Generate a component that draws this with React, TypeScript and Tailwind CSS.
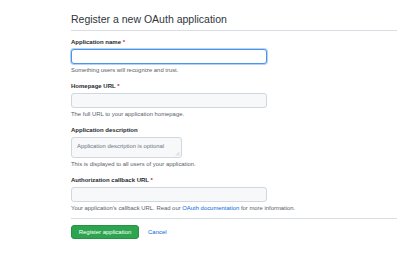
import React from "react";

const label = "block text-[6px] leading-[8px] font-bold text-[#24292f]";
const note = "mt-[2px] text-[5.9px] leading-[8px] text-[#57606a]";
const input =
  "block w-[196px] h-[15px] rounded-[3px] border border-[#d0d7de] bg-[#f6f8fa] px-[4px] text-[6px] outline-none";

export default function App() {
  return (
    <div
      className="min-h-screen bg-white pl-[71px] pr-[3px] pt-[12px] text-[#24292f]"
      style={{ fontFamily: '"Liberation Sans", Arial, sans-serif' }}
    >
      <div className="border-b border-[#d8dee4] pb-[4px]">
        <h2 className="text-[10.5px] leading-[14px] font-normal text-[#2f353b]">
          Register a new OAuth application
        </h2>
      </div>

      <form className="mt-[7px] flex flex-col gap-[8px]">
        <div>
          <label className={label}>
            Application name <span className="text-[#cf222e]">*</span>
          </label>
          <input
            type="text"
            className="mt-[3px] block w-[196px] h-[15px] rounded-[3px] border border-[#4a94ec] bg-white px-[4px] text-[6px] outline-none shadow-[0_0_0_1px_#b6d3f5]"
          />
          <p className={note}>Something users will recognize and trust.</p>
        </div>

        <div>
          <label className={label}>
            Homepage URL <span className="text-[#cf222e]">*</span>
          </label>
          <input type="text" className={"mt-[3px] " + input} />
          <p className={note}>The full URL to your application homepage.</p>
        </div>

        <div>
          <label className={label}>Application description</label>
          <div className="relative mt-[3px] w-[111px]">
            <textarea
              placeholder="Application description is optional"
              className="block w-[111px] h-[21px] resize-none rounded-[3px] border border-[#d0d7de] bg-[#f6f8fa] px-[5px] pt-[4px] text-[5.9px] leading-[8px] outline-none placeholder-[#6e7781]"
            />
            <svg
              className="absolute right-[2px] bottom-[2px]"
              width="5"
              height="5"
              viewBox="0 0 5 5"
            >
              <path d="M4.5 1 L1 4.5 M4.5 3 L3 4.5" stroke="#b0b6bc" strokeWidth="0.6" />
            </svg>
          </div>
          <p className={note}>This is displayed to all users of your application.</p>
        </div>

        <div>
          <label className={label}>
            Authorization callback URL <span className="text-[#cf222e]">*</span>
          </label>
          <input type="text" className={"mt-[3px] " + input} />
          <p className={note}>
            Your application's callback URL. Read our{" "}
            <a className="text-[#0969da]">OAuth documentation</a> for more
            information.
          </p>
        </div>
      </form>

      <div className="mt-[6px] border-t border-[#d8dee4]" />

      <div className="mt-[6px] flex items-center gap-[9px]">
        <button
          type="button"
          className="h-[14px] w-[68px] rounded-[3px] bg-[#2da44e] border border-[#2a9147] text-[6px] leading-[12px] text-white"
        >
          Register application
        </button>
        <a className="text-[6px] text-[#0969da]">Cancel</a>
      </div>
    </div>
  );
}
